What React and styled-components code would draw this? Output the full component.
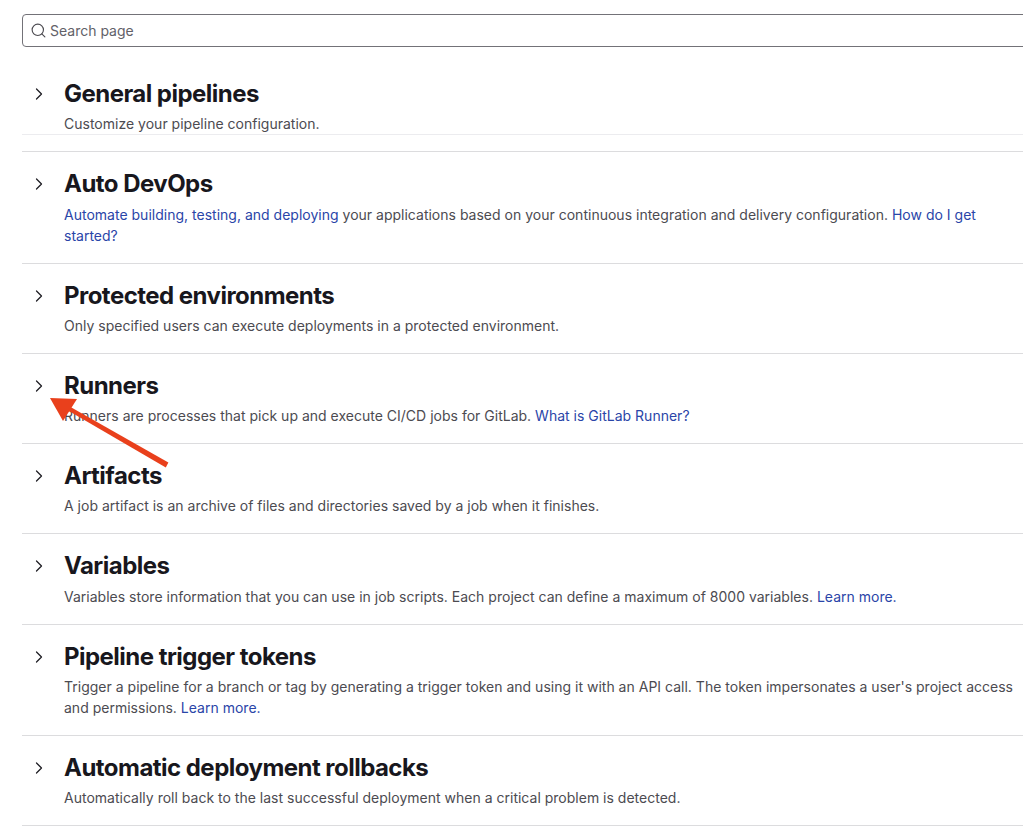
import React from "react";
import styled, { createGlobalStyle } from "styled-components";
import { ChevronRight, Search } from "lucide-react";

const GlobalStyle = createGlobalStyle`
  html, body {
    margin: 0;
    padding: 0;
    background: #fff;
    overflow: hidden;
  }
  body {
    font-family: Inter, "Noto Sans", sans-serif;
    color: #1f1e24;
  }
`;

const Page = styled.div`
  position: relative;
  width: 1023px;
  height: 827px;
  overflow: hidden;
  padding-left: 22px;
  box-sizing: border-box;
`;

const SearchBox = styled.div`
  display: flex;
  align-items: center;
  gap: 3px;
  box-sizing: border-box;
  width: 1100px;
  height: 33px;
  margin-top: 14px;
  padding-left: 7px;
  border: 1px solid #737278;
  border-radius: 4px;
  color: #626168;
  font-size: 14px;
`;

const SearchIcon = styled(Search)`
  width: 17px;
  height: 17px;
  color: #4c4b51;
`;

const List = styled.div`
  width: 1100px;
  margin-top: 14px;
  border-bottom: 1px solid #dcdcde;
`;

const Spacer = styled.div`
  height: 16.3px;
  border-top: 1px solid #ececef;
`;

const Section = styled.section`
  display: flex;
  padding: ${(p) => (p.$first ? "17px 0 0" : "16px 0 16.88px")};
  border-top: ${(p) => (p.$first ? "none" : "1px solid #dcdcde")};
`;

const Toggle = styled.div`
  display: flex;
  align-items: center;
  justify-content: center;
  width: 20px;
  height: 32px;
  margin-left: 7px;
  margin-right: 15px;
  color: #1f1e24;
`;

const Chevron = styled(ChevronRight)`
  width: 20px;
  height: 20px;
`;

const Body = styled.div`
  width: 960px;
`;

const Title = styled.h4`
  margin: 0;
  font-size: 24px;
  line-height: 32px;
  font-weight: 700;
  letter-spacing: -0.53px;
  color: #18171d;
`;

const Description = styled.p`
  margin: ${(p) => (p.$first ? "3px" : "3.4px")} 0 0;
  font-size: 14px;
  line-height: 21px;
  letter-spacing: 0.008px;
  color: #4c4b51;
`;

const Link = styled.a`
  color: #2a45a8;
  text-decoration: none;
`;

const ArrowOverlay = styled.svg`
  position: absolute;
  left: 0;
  top: 0;
  width: 1023px;
  height: 827px;
  pointer-events: none;
`;

const sections = [
  {
    title: "General pipelines",
    first: true,
    text: <>Customize your pipeline configuration.</>,
  },
  {
    title: "Auto DevOps",
    text: (
      <>
        <Link>Automate building, testing, and deploying</Link> your applications
        based on your continuous integration and delivery configuration.{" "}
        <Link>How do I get started?</Link>
      </>
    ),
  },
  {
    title: "Protected environments",
    text: <>Only specified users can execute deployments in a protected environment.</>,
  },
  {
    title: "Runners",
    text: (
      <>
        Runners are processes that pick up and execute CI/CD jobs for GitLab.{" "}
        <Link>What is GitLab Runner?</Link>
      </>
    ),
  },
  {
    title: "Artifacts",
    text: <>A job artifact is an archive of files and directories saved by a job when it finishes.</>,
  },
  {
    title: "Variables",
    text: (
      <>
        Variables store information that you can use in job scripts. Each project
        can define a maximum of 8000 variables. <Link>Learn more.</Link>
      </>
    ),
  },
  {
    title: "Pipeline trigger tokens",
    text: (
      <>
        Trigger a pipeline for a branch or tag by generating a trigger token and
        using it with an API call. The token impersonates a user's project access
        and permissions. <Link>Learn more.</Link>
      </>
    ),
  },
  {
    title: "Automatic deployment rollbacks",
    text: <>Automatically roll back to the last successful deployment when a critical problem is detected.</>,
  },
];

function App() {
  return (
    <Page>
      <GlobalStyle />
      <SearchBox>
        <SearchIcon strokeWidth={1.6} />
        Search page
      </SearchBox>
      <List>
        {sections.map((item, index) => (
          <React.Fragment key={index}>
            <Section $first={item.first}>
              <Toggle>
                <Chevron strokeWidth={1.5} />
              </Toggle>
              <Body>
                <Title>{item.title}</Title>
                <Description $first={item.first}>{item.text}</Description>
              </Body>
            </Section>
            {item.first && <Spacer />}
          </React.Fragment>
        ))}
      </List>
      <ArrowOverlay viewBox="0 0 1023 827">
        <polygon points="165.8,467.4 168.4,462.6 67,405 65,408.7" fill="#e9401c" />
        <polygon points="50,398 77,399 63,421" fill="#e9401c" />
      </ArrowOverlay>
    </Page>
  );
}

export default App;
